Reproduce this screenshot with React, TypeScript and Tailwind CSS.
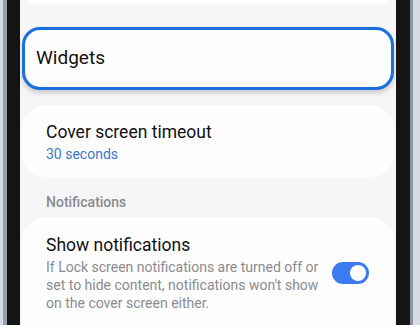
import React from "react";

const font = { fontFamily: "Roboto, 'Noto Sans', sans-serif" };

function Toggle({ on = true }: { on?: boolean }) {
  return (
    <div
      className={`flex h-[22px] w-[37px] shrink-0 items-center rounded-full px-[3px] ${
        on ? "justify-end bg-[#3b7af0]" : "justify-start bg-gray-300"
      }`}
    >
      <div className="h-[16px] w-[16px] rounded-full bg-white" />
    </div>
  );
}

export default function App() {
  return (
    <div className="flex h-[325px] w-[420px] overflow-hidden bg-[#c9d0dc]" style={font}>
      {/* left frame */}
      <div className="flex w-[7px] shrink-0">
        <div className="w-[3px] bg-[#d5dbe6]" />
        <div className="w-[4px] bg-[#9aa1ac]" />
      </div>
      <div className="w-[13px] shrink-0 bg-[#141414]" />

      {/* screen */}
      <div className="flex min-w-0 flex-1 flex-col bg-[#f6f6f8] px-[2px]">
        <div className="-mt-[23px] h-[28px] shrink-0 rounded-[24px] bg-[#fdfdfe]" />

        <div className="mt-[22px] flex h-[63px] shrink-0 items-center rounded-[18px] border-[3px] border-[#1a6fdf] bg-[#fdfdfe] px-[11px] shadow-[0_3px_5px_rgba(0,0,0,0.18)]">
          <span className="text-[19px] text-[#111]">Widgets</span>
        </div>

        <div className="mt-[15px] flex h-[73px] shrink-0 flex-col justify-center rounded-[24px] bg-[#fdfdfe] px-[24px]">
          <span className="text-[17.5px] leading-[22px] text-[#111]">Cover screen timeout</span>
          <span className="mt-[2px] text-[14px] leading-[18px] text-[#3c77c7]">30 seconds</span>
        </div>

        <div className="mt-[15px] px-[24px] text-[14px] font-medium leading-[18px] text-[#8a8a8e]">
          Notifications
        </div>

        <div className="mt-[6px] flex-1 rounded-t-[24px] bg-[#fdfdfe] pl-[24px] pr-[25px] pt-[17px]">
          <div className="flex items-center gap-[8px]">
            <div className="min-w-0 flex-1">
              <div className="text-[17.5px] leading-[22px] text-[#111]">Show notifications</div>
              <div className="mt-[2px] text-[14px] leading-[18px] text-[#8b8b8f]">
                If Lock screen notifications are turned off or set to hide content, notifications
                won't show on the cover screen either.
              </div>
            </div>
            <Toggle />
          </div>
          <div className="mt-[14px] -mx-[6px] h-px bg-[#ececef]" />
        </div>
      </div>

      {/* right frame */}
      <div className="w-[14px] shrink-0 bg-[#141414]" />
      <div className="flex w-[10px] shrink-0">
        <div className="w-[3px] bg-[#8e96a3]" />
        <div className="w-[7px] bg-[#d7dbe6]" />
      </div>
    </div>
  );
}
